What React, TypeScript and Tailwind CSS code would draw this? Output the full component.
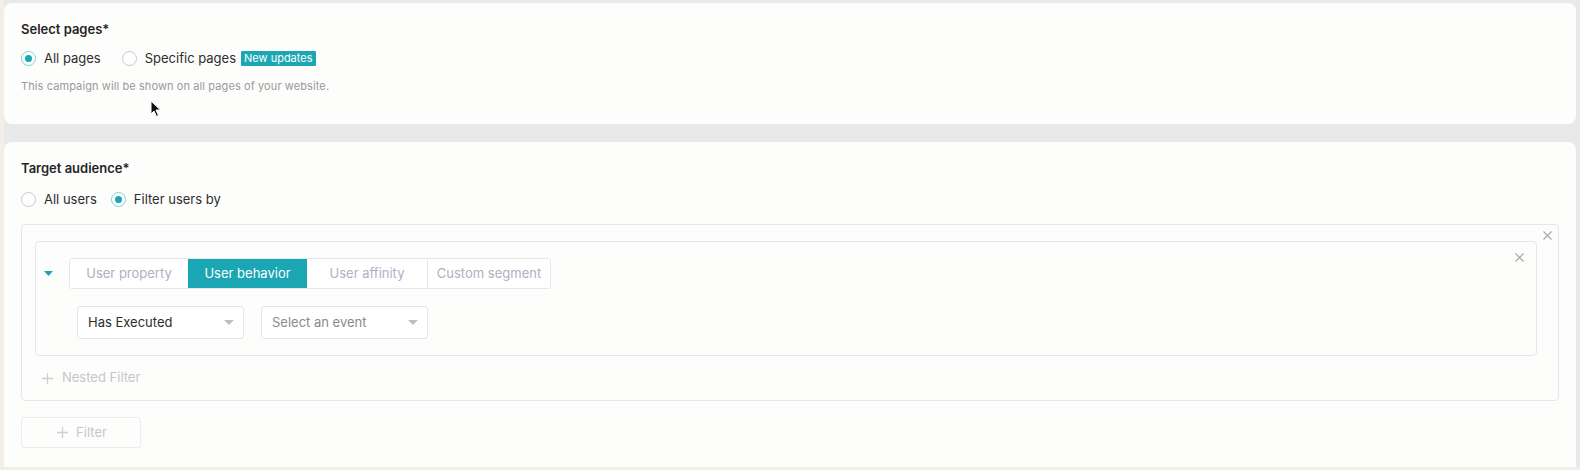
import React from "react";

const font = { fontFamily: "Inter, 'Noto Sans', sans-serif" };

function Radio({ checked, label }: { checked: boolean; label: string }) {
  return (
    <label className="flex items-center gap-[8px] h-[18px]">
      <span
        className={
          checked
            ? "w-[15px] h-[15px] rounded-full border border-[#7fcfd6] flex items-center justify-center bg-white"
            : "w-[15px] h-[15px] rounded-full border border-[#c9c9cf] bg-white"
        }
      >
        {checked && <span className="w-[7px] h-[7px] rounded-full bg-[#1aa6b2]" />}
      </span>
      <span className="text-[13px] leading-[18px] text-[#2d2d2d]">{label}</span>
    </label>
  );
}

function XIcon() {
  return (
    <svg width="9" height="9" viewBox="0 0 9 9">
      <path d="M0.5 0.5 L8.5 8.5 M8.5 0.5 L0.5 8.5" stroke="#a8a8ae" strokeWidth="1.2" />
    </svg>
  );
}

function Plus({ color }: { color: string }) {
  return (
    <svg width="11" height="11" viewBox="0 0 11 11">
      <path d="M5.5 0 V11 M0 5.5 H11" stroke={color} strokeWidth="1.3" />
    </svg>
  );
}

function SelectBox({ value, placeholder }: { value: string; placeholder?: boolean }) {
  return (
    <div className="w-[167px] h-[33px] border border-[#e5e5ec] rounded-[3px] bg-white flex items-center justify-between pl-[10px] pr-[9px]">
      <span className={placeholder ? "text-[13px] text-[#8a8a90]" : "text-[13px] text-[#2d2d2d]"}>{value}</span>
      <svg width="10" height="6" viewBox="0 0 10 6">
        <path d="M0 0 H10 L5 5 Z" fill="#bdbdc2" />
      </svg>
    </div>
  );
}

export default function App() {
  const tabs = [
    { label: "User property", w: "w-[118px]", active: false },
    { label: "User behavior", w: "w-[119px]", active: true },
    { label: "User affinity", w: "w-[120px]", active: false },
    { label: "Custom segment", w: "w-[123px]", active: false },
  ];
  return (
    <div className="w-[1580px] h-[470px] overflow-hidden bg-[#f3eee7] relative" style={font}>
      <div className="ml-[4px] h-[467px] bg-[#e9e9eb] pt-[3px] pr-[4px] flex flex-col gap-[18px]">
        {/* Card 1 */}
        <div className="h-[121px] rounded-[8px] bg-[#fdfdfc] px-[17px] pt-[17px]">
          <div className="text-[13px] leading-[18px] font-semibold text-[#252525]">Select pages*</div>
          <div className="mt-[11px] flex items-center">
            <Radio checked label="All pages" />
            <div className="ml-[21px]">
              <Radio checked={false} label="Specific pages" />
            </div>
            <span className="ml-[5px] bg-[#1aa6b2] text-white text-[11px] leading-[15px] px-[3px] rounded-[1px]">
              New updates
            </span>
          </div>
          <div className="mt-[12px] text-[11px] leading-[14px] tracking-[0.1px] text-[#9a9a9f]">
            This campaign will be shown on all pages of your website.
          </div>
        </div>

        {/* Card 2 */}
        <div className="flex-1 rounded-t-[8px] bg-[#fdfdfc] px-[17px] pt-[17px]">
          <div className="text-[13px] leading-[18px] font-semibold text-[#252525]">Target audience*</div>
          <div className="mt-[13px] flex items-center gap-[14px]">
            <Radio checked={false} label="All users" />
            <Radio checked label="Filter users by" />
          </div>

          <div className="mt-[16px] relative border border-[#e6e6ec] rounded-[4px] pl-[13px] pr-[21px] pt-[16px] pb-[14px]">
            <div className="absolute top-[6px] right-[6px]">
              <XIcon />
            </div>
            <div className="relative border border-[#e6e6ec] rounded-[4px] pt-[16px] pb-[16px] pl-[8px]">
              <div className="absolute top-[11px] right-[12px]">
                <XIcon />
              </div>
              <div className="flex items-center">
                <svg width="9" height="6" viewBox="0 0 9 6">
                  <path d="M0 0 H9 L4.5 5 Z" fill="#1aa6b2" />
                </svg>
                <div className="ml-[16px] flex h-[31px] border border-[#e6e6ec] rounded-[3px] overflow-hidden">
                  {tabs.map((t, i) => (
                    <div
                      key={t.label}
                      className={
                        (t.active
                          ? "bg-[#1aa6b2] text-white "
                          : "bg-white text-[#aeb0c3] ") +
                        t.w +
                        (i > 0 && !t.active && !tabs[i - 1].active ? " border-l border-[#e6e6ec]" : "") +
                        " flex items-center justify-center text-[13px]"
                      }
                    >
                      {t.label}
                    </div>
                  ))}
                </div>
              </div>
              <div className="mt-[17px] ml-[33px] flex gap-[17px]">
                <SelectBox value="Has Executed" />
                <SelectBox value="Select an event" placeholder />
              </div>
            </div>
            <div className="mt-[14px] flex items-center h-[16px] pl-[7px]">
              <Plus color="#cfcfd5" />
              <span className="ml-[9px] text-[13px] text-[#c6c6cd]">Nested Filter</span>
            </div>
          </div>

          <div className="mt-[16px] w-[120px] h-[31px] border border-[#ececf0] rounded-[3px] flex items-center justify-center gap-[8px] pl-[2px]">
            <Plus color="#cfcfd5" />
            <span className="text-[13px] text-[#c6c6cd]">Filter</span>
          </div>
        </div>
      </div>

      {/* mouse cursor */}
      <svg className="absolute left-[150px] top-[100px]" width="12" height="18" viewBox="0 0 12 18">
        <path d="M1 1 L1 14 L4 11 L6.5 16.5 L8.5 15.5 L6 10 L10.5 10 Z" fill="#111" stroke="#fff" strokeWidth="1" />
      </svg>
    </div>
  );
}
